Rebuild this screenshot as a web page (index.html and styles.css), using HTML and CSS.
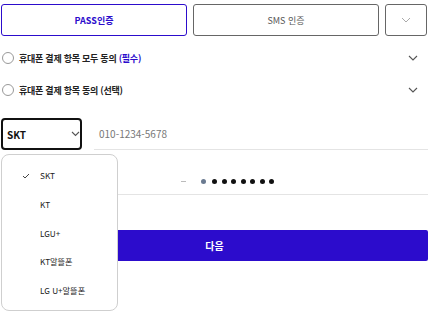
FILE: index.html
```html
<!DOCTYPE html>
<html lang="ko">
<head>
<meta charset="utf-8">
<link rel="stylesheet" href="styles.css">
</head>
<body>
<div class="page">
  <div class="tabs">
    <button class="tab tab-active">PASS인증</button>
    <button class="tab">SMS 인증</button>
    <button class="tab tab-more">
      <svg width="10" height="6" viewBox="0 0 10 6"><path d="M1 1l4 4 4-4" fill="none" stroke="#aaa" stroke-width="1"/></svg>
    </button>
  </div>

  <div class="agree agree-first">
    <span class="radio"></span>
    <span class="agree-text">휴대폰 결제 항목 모두 동의 <em class="req">(필수)</em></span>
    <svg class="chev" width="10" height="6" viewBox="0 0 10 6"><path d="M1 1l4 4 4-4" fill="none" stroke="#555" stroke-width="1.1"/></svg>
  </div>
  <div class="agree">
    <span class="radio"></span>
    <span class="agree-text">휴대폰 결제 항목 동의 (선택)</span>
    <svg class="chev" width="10" height="6" viewBox="0 0 10 6"><path d="M1 1l4 4 4-4" fill="none" stroke="#555" stroke-width="1.1"/></svg>
  </div>

  <div class="phone-row">
    <div class="select">
      <span>SKT</span>
      <svg width="9" height="6" viewBox="0 0 9 6"><path d="M1 1l3.5 3.5L8 1" fill="none" stroke="#555" stroke-width="1.1"/></svg>
    </div>
    <div class="phone">010-1234-5678</div>
  </div>

  <div class="pin-row">
    <span class="dash"></span>
    <span class="dot dot-gray"></span>
    <span class="dot"></span><span class="dot"></span><span class="dot"></span><span class="dot"></span><span class="dot"></span><span class="dot"></span><span class="dot"></span>
  </div>

  <button class="next">다음</button>

  <ul class="menu">
    <li class="menu-item selected"><svg class="check" width="8" height="6" viewBox="0 0 8 6"><path d="M1 3l2 2 4-4" fill="none" stroke="#444" stroke-width="1"/></svg>SKT</li>
    <li class="menu-item">KT</li>
    <li class="menu-item">LGU+</li>
    <li class="menu-item">KT알뜰폰</li>
    <li class="menu-item">LG U+알뜰폰</li>
  </ul>
</div>
</body>
</html>
```

FILE: styles.css
```css
* { box-sizing: border-box; }
html, body { margin: 0; padding: 0; background: #fff; }
body {
  font-family: "Noto Sans CJK KR", "Noto Sans", sans-serif;
  color: #222;
  width: 430px;
  height: 316px;
  overflow: hidden;
}
.page { position: relative; padding: 4px 2px 0 1px; }

.tabs { display: flex; gap: 6px; height: 32px; }
.tab {
  font-family: inherit;
  background: #fff;
  border: 1px solid #666;
  border-radius: 3px;
  width: 186px;
  font-size: 9px;
  color: #555;
  padding: 0;
  display: flex; align-items: center; justify-content: center;
}
.tab-active {
  border: 1.5px solid #2c0ccc;
  color: #2c0ccc;
  font-weight: 700;
}
.tab-more { width: 42px; }

.agree {
  display: flex; align-items: center;
  height: 32px;
  padding-left: 1px;
}
.agree-first { margin-top: 6px; }
.radio {
  width: 12px; height: 12px;
  border: 1px solid #999;
  border-radius: 50%;
  margin-right: 5px;
}
.agree-text { font-size: 9px; font-weight: 700; color: #222; flex: 1; letter-spacing: -0.25px; }
.req { font-style: normal; color: #2c0ccc; }
.chev { margin-right: 10px; }

.phone-row { display: flex; align-items: stretch; margin-top: 12px; height: 32px; }
.select {
  width: 81px;
  border: 2px solid #111;
  border-radius: 4px;
  display: flex; align-items: center; justify-content: space-between;
  padding: 0 0 0 4px;
  font-size: 10px; font-weight: 700; color: #111;
}
.phone {
  flex: 1;
  margin-left: 12px;
  border-bottom: 1px solid #e4e4e4;
  display: flex; align-items: center;
  padding-left: 5px;
  font-size: 10px; color: #777;
}

.pin-row {
  display: flex; align-items: center;
  height: 27px;
  margin-top: 18px;
  border-bottom: 1px solid #e4e4e4;
  padding-left: 180px;
}
.dash { width: 5px; height: 1px; background: #bbb; margin-right: 15px; }
.dot { width: 5px; height: 5px; border-radius: 50%; background: #111; margin-right: 4.5px; }
.dot-gray { background: #6a7a90; margin-right: 6px; }

.next {
  display: block;
  width: 427px;
  height: 31px;
  margin-top: 35px;
  background: #2c0ccc;
  color: #fff;
  border: none;
  border-radius: 2px;
  font-family: inherit;
  font-size: 10px;
  font-weight: 700;
}

.menu {
  position: absolute;
  left: 1px; top: 154px;
  width: 117px; height: 157px;
  margin: 0; padding: 6px 0 0 0;
  list-style: none;
  background: #fff;
  border: 1px solid #cfcfcf;
  border-radius: 8px;
}
.menu-item {
  position: relative;
  height: 28.7px;
  display: flex; align-items: center;
  padding-left: 38px;
  font-size: 8.2px;
  color: #222;
}
.check { position: absolute; left: 20px; top: 12px; }
```
